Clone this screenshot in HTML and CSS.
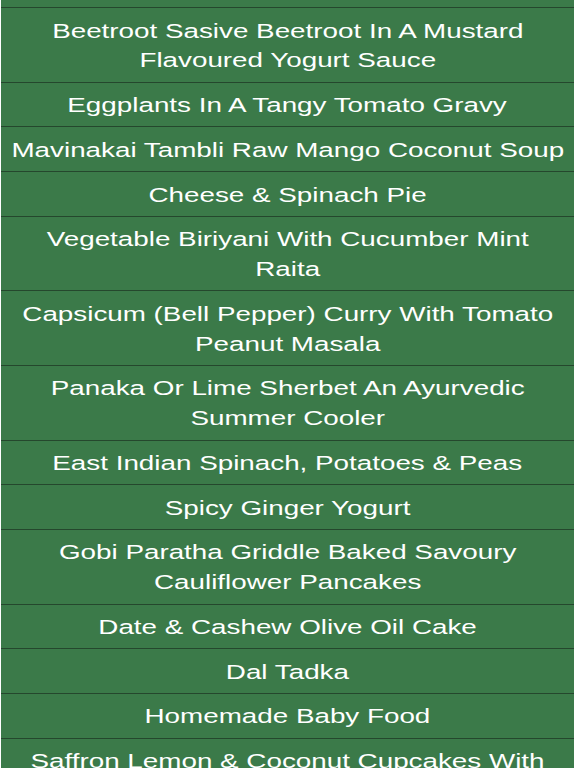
FILE: index.html
```html
<!DOCTYPE html>
<html>
<head>
<meta charset="utf-8">
<link rel="stylesheet" href="styles.css">
</head>
<body>
<div class="list">
  <div class="row top"></div>
  <div class="row"><span class="t">Beetroot Sasive Beetroot In A Mustard<br>Flavoured Yogurt Sauce</span></div>
  <div class="row"><span class="t">Eggplants In A Tangy Tomato Gravy</span></div>
  <div class="row"><span class="t">Mavinakai Tambli Raw Mango Coconut Soup</span></div>
  <div class="row"><span class="t">Cheese &amp; Spinach Pie</span></div>
  <div class="row"><span class="t">Vegetable Biriyani With Cucumber Mint<br>Raita</span></div>
  <div class="row"><span class="t">Capsicum (Bell Pepper) Curry With Tomato<br>Peanut Masala</span></div>
  <div class="row"><span class="t">Panaka Or Lime Sherbet An Ayurvedic<br>Summer Cooler</span></div>
  <div class="row"><span class="t">East Indian Spinach, Potatoes &amp; Peas</span></div>
  <div class="row"><span class="t">Spicy Ginger Yogurt</span></div>
  <div class="row"><span class="t">Gobi Paratha Griddle Baked Savoury<br>Cauliflower Pancakes</span></div>
  <div class="row"><span class="t">Date &amp; Cashew Olive Oil Cake</span></div>
  <div class="row"><span class="t">Dal Tadka</span></div>
  <div class="row"><span class="t">Homemade Baby Food</span></div>
  <div class="row"><span class="t">Saffron Lemon &amp; Coconut Cupcakes With<br>Cream Cheese Frosting</span></div>
</div>
</body>
</html>
```
FILE: styles.css
```css
html, body {
  margin: 0;
  padding: 0;
  background: #ffffff;
  height: 768px;
  overflow: hidden;
}
.list {
  margin: 0 2px 0 1px;
  background: #3b7a49;
}
.row {
  font-family: "Liberation Sans", Arial, sans-serif;
  font-size: 20.5px;
  line-height: 29.9px;
  color: #ffffff;
  text-align: center;
  padding: 7.5px 0 6.3px;
  border-bottom: 1px solid #25472d;
  background: #3b7a49;
  white-space: nowrap;
}
.row .t {
  display: inline-block;
  transform: scaleX(1.356);
}
.row.top {
  height: 8px;
  padding: 0;
  box-sizing: border-box;
}
```
